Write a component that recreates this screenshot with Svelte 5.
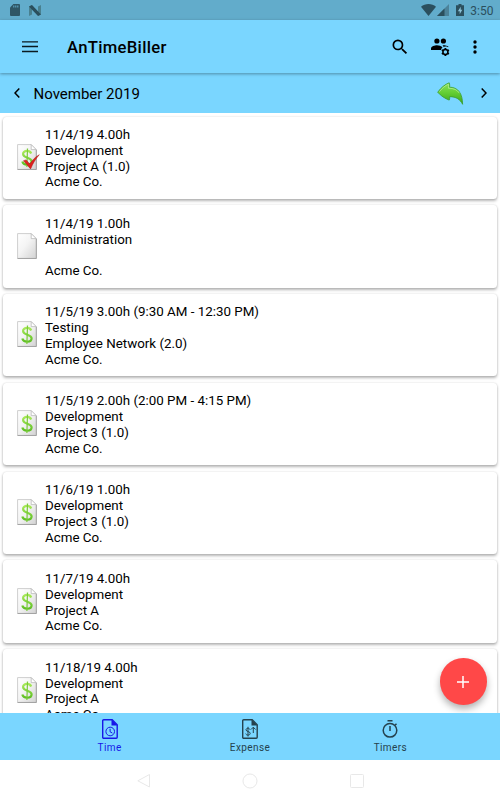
<script lang="ts">
  type Entry = {
    title: string;
    task: string;
    project: string;
    client: string;
    icon: 'checked' | 'blank' | 'billable';
  };

  const entries: Entry[] = [
    { title: '11/4/19 4.00h', task: 'Development', project: 'Project A (1.0)', client: 'Acme Co.', icon: 'checked' },
    { title: '11/4/19 1.00h', task: 'Administration', project: '', client: 'Acme Co.', icon: 'blank' },
    { title: '11/5/19 3.00h (9:30 AM - 12:30 PM)', task: 'Testing', project: 'Employee Network (2.0)', client: 'Acme Co.', icon: 'billable' },
    { title: '11/5/19 2.00h (2:00 PM - 4:15 PM)', task: 'Development', project: 'Project 3 (1.0)', client: 'Acme Co.', icon: 'billable' },
    { title: '11/6/19 1.00h', task: 'Development', project: 'Project 3 (1.0)', client: 'Acme Co.', icon: 'billable' },
    { title: '11/7/19 4.00h', task: 'Development', project: 'Project A', client: 'Acme Co.', icon: 'billable' },
    { title: '11/18/19 4.00h', task: 'Development', project: 'Project A', client: 'Acme Co.', icon: 'billable' },
  ];

  let month = $state('November 2019');
  let tab = $state('Time');
  const tabs = ['Time', 'Expense', 'Timers'];
</script>

<div class="screen">
  <div class="status">
    <svg class="sd" width="10" height="12" viewBox="0 0 10 12">
      <path fill="#2f5665" d="M3.4 0H9a1 1 0 0 1 1 1v10a1 1 0 0 1-1 1H1a1 1 0 0 1-1-1V3.4z" />
      <path stroke="#62accb" d="M3.8 1.5v2M5.8 1.5v2M7.8 1.5v2" />
    </svg>
    <svg class="nougat" width="12" height="11" viewBox="0 0 12 11">
      <path fill="#49808f" d="M0 1.5l3-1.5v9.5L0 11zM9 1.5L12 0v9.5L9 11z" />
      <path fill="#2b4f5d" d="M0 1.5L3 0l9 9.5L9 11z" />
    </svg>
    <span class="grow"></span>
    <svg class="wifi" width="15" height="12" viewBox="0 0 15 12">
      <path fill="#2b4f5d" d="M0 2.7C4-.9 11-.9 15 2.7L7.5 12z" />
    </svg>
    <svg class="signal" width="12" height="12" viewBox="0 0 12 12">
      <path fill="#4c8299" d="M12 0v12H0z" />
      <path fill="#2b4f5d" d="M7.5 4.5V12H0z" />
    </svg>
    <svg class="battery" width="8" height="12" viewBox="0 0 8 12">
      <path fill="#2b4f5d" d="M2.5 0h3v1.2H8V12H0V1.2h2.5z" />
      <path fill="#8cc3d8" d="M4.7 2.8L1.9 7.2h1.8v3l2.6-4.4H4.7z" />
    </svg>
    <span class="clock">3:50</span>
  </div>

  <header>
    <svg class="menu" width="16" height="12" viewBox="0 0 16 12">
      <path stroke="#0b1a20" stroke-width="1.3" d="M0 .8h16M0 5.5h16M0 10.5h16" />
    </svg>
    <h1>AnTimeBiller</h1>
    <svg class="search" width="20" height="20" viewBox="0 0 24 24">
      <path d="M15.5 14h-.79l-.28-.27A6.471 6.471 0 0 0 16 9.5 6.5 6.5 0 1 0 9.5 16c1.61 0 3.09-.59 4.23-1.57l.27.28v.79l5 4.99L20.49 19l-4.99-5zm-6 0C7.01 14 5 11.99 5 9.5S7.01 5 9.5 5 14 7.01 14 9.5 11.99 14 9.5 14z" />
    </svg>
    <svg class="group" width="20" height="20" viewBox="0 0 20 20">
      <circle cx="6.9" cy="4" r="2.6" />
      <circle cx="13.4" cy="4" r="2.6" />
      <path d="M1 13v-1.6c0-2 3.8-3.1 6-3.1 1.8 0 4.4.7 5.5 2-.8.7-1.3 1.6-1.4 2.700z" />
      <path d="M12.6 8.400c2.200-.2 4.500.4 5.900 1.300l-.5.5-1.100-.6h-2.400l-.5.6z" />
      <circle cx="15.400" cy="15" r="2.500" fill="none" stroke="#000" stroke-width="1.500" />
      <path stroke="#000" stroke-width="1.800" d="M15.400 11v1.500M15.400 17.500v1.500M11.900 13l1.300.75M17.600 16.250l1.300.75M11.900 17l1.300-.75M17.600 13.750l1.300-.75" />
    </svg>
    <svg class="more" width="4" height="14" viewBox="0 0 4 14">
      <circle cx="2" cy="2" r="1.7" />
      <circle cx="2" cy="7" r="1.7" />
      <circle cx="2" cy="12" r="1.7" />
    </svg>
  </header>

  <div class="month">
    <svg class="prev" width="6" height="10" viewBox="0 0 6 10">
      <path fill="none" stroke="#000" stroke-width="1.5" d="M5.3.6L1 5l4.3 4.4" />
    </svg>
    <span class="label">{month}</span>
    <svg class="undo" width="27" height="23" viewBox="0 0 27 23">
      <defs>
        <linearGradient id="leaf" x1="0" y1="0" x2="0" y2="1">
          <stop offset="0" stop-color="#8be05c" />
          <stop offset=".45" stop-color="#65cf35" />
          <stop offset="1" stop-color="#39a51b" />
        </linearGradient>
      </defs>
      <path fill="url(#leaf)" stroke="#399d2b" stroke-width=".8" d="M.7 10.2C4 5.6 8 2.4 12.2.8c.6 1.4.6 2.9.4 4.4C21.200 5.200 25.500 11.600 25.600 22.300c-2.500-5-6.600-7.700-13-7.600.1 1.400.2 2.400-.4 3.400C8 16.500 4 14 .7 10.200z" />
      <path fill="none" stroke="#b5ee93" stroke-width=".8" d="M2.500 9.600C5.300 6 8.300 3.500 11.500 2.200c.3 1.300.1 2.700-.1 4 5.600.1 8.800 1.600 11 5" />
    </svg>
    <svg class="next" width="6" height="10" viewBox="0 0 6 10">
      <path fill="none" stroke="#000" stroke-width="1.5" d="M.7.6L5 5 .7 9.4" />
    </svg>
  </div>

  <main>
    {#each entries as entry}
      <div class="card">
        <svg class="doc" width="24" height="28" viewBox="0 0 24 28">
          <defs>
            <linearGradient id="paper" x1="0" y1="0" x2="1" y2="1">
              <stop offset="0" stop-color="#fff" />
              <stop offset=".45" stop-color="#f4f4f4" />
              <stop offset="1" stop-color="#d2d2d2" />
            </linearGradient>
            <linearGradient id="cash" x1="0" y1="0" x2="0" y2="1">
              <stop offset="0" stop-color="#a9e95a" />
              <stop offset="1" stop-color="#5fc024" />
            </linearGradient>
          </defs>
          <path fill="url(#paper)" stroke="#c2c2c2" stroke-width=".8" d="M.6.6h13.6l5 5v19.800H.6z" />
          <path stroke="#999" stroke-width=".8" d="M.6 25.5h18.800V6" fill="none" />
          <path fill="#fff" stroke="#b2b2b2" stroke-width=".7" d="M14.2.6v5h5z" />
          {#if entry.icon !== 'blank'}
            <path
              fill="none"
              stroke="url(#cash)"
              stroke-width="2.2"
              d="M14.2 9.500C13.500 7.600 12 6.900 10 6.900 7.500 6.900 6.100 8.300 6.100 10c0 4.400 8.500 3 8.500 7.200 0 2.100-1.800 3.500-4.500 3.500-2.600 0-4.200-1-4.800-3.200"
            />
            <path stroke="#7acb38" stroke-width="1.200" d="M10.500 4.400L9.900 23" />
          {/if}
          {#if entry.icon === 'checked'}
            <path fill="#df2020" stroke="#a81919" stroke-width=".5" d="M6.500 16.700l2.600-.8 3.700 4.100c2.500-4 5.700-7.200 9.500-9.300-3.400 3.900-6.500 8.600-8.700 14.200z" />
          {/if}
        </svg>
        <div class="lines">
          <p>{entry.title}</p>
          <p>{entry.task}</p>
          <p>{entry.project}</p>
          <p>{entry.client}</p>
        </div>
      </div>
    {/each}
    <button class="fab" aria-label="Add">
      <svg width="14" height="14" viewBox="0 0 14 14">
        <path stroke="#fff" stroke-width="1.5" d="M7 1v12M1 7h12" />
      </svg>
    </button>
  </main>

  <nav>
    {#each tabs as name}
      <button class="tab" class:active={tab === name} onclick={() => (tab = name)}>
        <svg width="20" height="22" viewBox="0 0 20 22">
          {#if name === 'Timers'}
            <g fill="none" stroke="currentColor" stroke-width="1.5">
              <circle cx="10" cy="12.3" r="6.8" />
              <path d="M7.5 2.7h5M10 8v5M15 7.300l1.5-1.5" />
            </g>
          {:else}
            <path fill="none" stroke="currentColor" stroke-width="1.4" d="M3.7 1.7h8.500l5 5v12.600a1 1 0 0 1-1 1H3.700a1 1 0 0 1-1-1V2.700a1 1 0 0 1 1-1z" />
            <path fill="currentColor" d="M11.5 1.5l6 6h-6z" />
            {#if name === 'Time'}
              <g fill="none" stroke="currentColor">
                <circle cx="10.2" cy="13.5" r="4.3" />
                <path d="M10.1 10.800v3l2.200 1.200" />
              </g>
            {:else}
              <g fill="none" stroke="currentColor">
                <path d="M10 11.600c-.4-1-1.200-1.300-2.100-1.300-1.100 0-1.900.6-1.900 1.500 0 2.200 4.200 1.200 4.200 3.600 0 1-.9 1.700-2.200 1.700-1.200 0-2-.5-2.300-1.500M8 8.800v9.700M13.300 15V9.400M11 11.500l2.300-2.300 2.300 2.300" />
              </g>
            {/if}
          {/if}
        </svg>
        <span>{name}</span>
      </button>
    {/each}
  </nav>

  <div class="system">
    <svg width="14" height="16" viewBox="0 0 14 16">
      <path d="M12.5 1.5v12.500L.8 7.800z" />
    </svg>
    <svg width="16" height="16" viewBox="0 0 16 16">
      <circle cx="8" cy="8" r="7" />
    </svg>
    <svg width="16" height="16" viewBox="0 0 16 16">
      <rect x="1.5" y="1.5" width="13" height="13" rx="1" />
    </svg>
  </div>
</div>

<style>
  :global(body) {
    background: #fff;
  }
  .screen {
    width: 500px;
    height: 800px;
    display: flex;
    flex-direction: column;
    overflow: hidden;
    font-family: Roboto, sans-serif;
    color: #000;
    background: #fff;
  }
  svg {
    display: block;
    flex: none;
  }
  button {
    border: 0;
    padding: 0;
    font-family: inherit;
  }
  .status {
    height: 20px;
    flex: none;
    display: flex;
    align-items: center;
    box-sizing: border-box;
    padding: 0 6.5px 0 10px;
    background: #62accb;
  }
  .nougat {
    margin-left: 9px;
  }
  .grow {
    flex: 1;
  }
  .signal {
    margin-left: 1px;
  }
  .battery {
    margin: 0 6px 0 7px;
  }
  .clock {
    margin-top: 1px;
    font-size: 12px;
    line-height: 20px;
    color: #2b4f5d;
  }
  header {
    height: 53px;
    flex: none;
    display: flex;
    align-items: center;
    box-sizing: border-box;
    padding: 0 23px 0 22px;
    background: #7ad6ff;
    box-shadow: 0 1px 3px rgba(0, 0, 0, 0.35);
    z-index: 1;
  }
  h1 {
    flex: 1;
    margin: 2px 0 0 29px;
    font-size: 16.67px;
    font-weight: 500;
    letter-spacing: 0.3px;
  }
  .group {
    margin-left: 20px;
  }
  .more {
    margin-left: 23px;
  }
  .month {
    height: 40px;
    flex: none;
    display: flex;
    align-items: center;
    box-sizing: border-box;
    padding: 0 13px 0 13.5px;
    background: #7ad6ff;
  }
  .label {
    flex: 1;
    margin: 2px 0 0 14px;
    font-size: 15px;
  }
  .next {
    margin-left: 17px;
  }
  main {
    position: relative;
    flex: 1;
    min-height: 0;
    overflow: hidden;
    padding: 3.5px 3px 0;
    background: #fff;
  }
  .card {
    height: 82.3px;
    margin-bottom: 6.5px;
    box-sizing: border-box;
    padding: 10.4px 0 0 13.5px;
    display: flex;
    border-radius: 3.5px;
    background: #fff;
    box-shadow: 0 2px 3px rgba(0, 0, 0, 0.28), 0 0 2px rgba(0, 0, 0, 0.16);
  }
  .doc {
    margin-top: 17px;
  }
  .lines {
    margin-left: 4.5px;
  }
  p {
    height: 15.85px;
    margin: 0;
    font-size: 13.35px;
    line-height: 15.85px;
    white-space: nowrap;
  }
  .fab {
    position: absolute;
    right: 13.5px;
    bottom: 8.5px;
    width: 46.5px;
    height: 46.5px;
    display: flex;
    align-items: center;
    justify-content: center;
    border-radius: 50%;
    background: #ff4848;
    box-shadow: 0 4px 7px rgba(0, 0, 0, 0.3);
  }
  nav {
    height: 46.6px;
    flex: none;
    display: flex;
    justify-content: center;
    background: #7ad6ff;
  }
  .tab {
    width: 140.4px;
    padding-top: 5px;
    display: flex;
    flex-direction: column;
    align-items: center;
    background: none;
    color: #25424e;
    font-size: 10px;
    letter-spacing: 0.4px;
  }
  .tab span {
    margin-top: 1.5px;
    line-height: 12px;
  }
  .active {
    color: #1717e8;
  }
  .system {
    height: 40px;
    flex: none;
    display: flex;
    align-items: center;
    justify-content: center;
    gap: 91px;
    padding: 2px 0 0 2px;
    box-sizing: border-box;
  }
  .system svg {
    fill: none;
    stroke: #e8e8e8;
  }
</style>
